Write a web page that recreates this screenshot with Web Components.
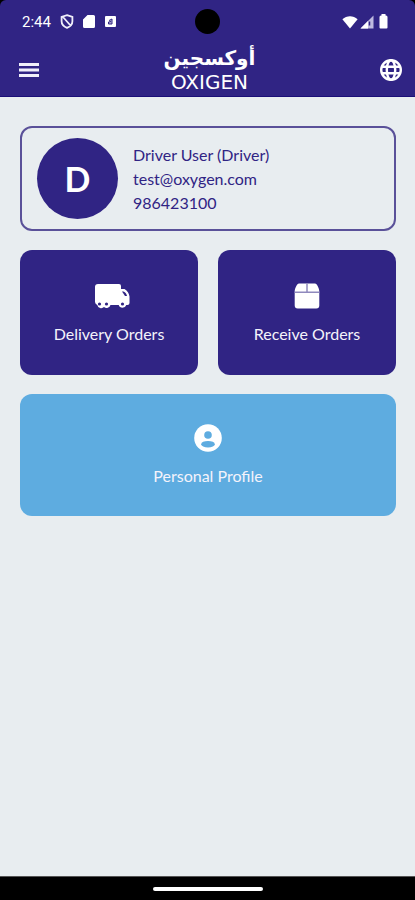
<!DOCTYPE html>
<html lang="en">
<head>
<meta charset="utf-8">
<meta name="viewport" content="width=device-width, initial-scale=1">
<title>Oxigen Driver</title>
<style>
  html { background: #000; }
  body { margin: 0; font-family: Lato, "Liberation Sans", sans-serif; }
</style>
</head>
<body>
<driver-app></driver-app>
<script>
const define = (name, html) => {
  const template = document.createElement('template');
  template.innerHTML = '<style>*{box-sizing:border-box}svg{display:block}</style>' + html;
  customElements.define(name, class extends HTMLElement {
    constructor() {
      super();
      this.attachShadow({ mode: 'open' }).append(template.content.cloneNode(true));
    }
  });
};

define('status-bar', `
  <style>
    :host { display: grid; grid-template-columns: 1fr auto 1fr; align-items: center; height: 43px; padding: 0 22px; color: #fff; }
    .side { display: flex; align-items: center; gap: 8px; }
    .end { justify-content: flex-end; gap: 2px; padding-right: 3px; }
    time { font: 400 15px Roboto, sans-serif; margin-right: 1px; }
    .camera { width: 25px; height: 25px; border-radius: 50%; background: #000; }
  </style>
  <div class="side">
    <time>2:44</time>
    <svg width="14" height="15" viewBox="0 0 14 15" fill="none" stroke="#f0effa" stroke-width="1.8"><path d="M7 1.2 12.4 3v4.2c0 3-2.2 5.3-5.4 6.6C3.800 12.500 1.600 10.200 1.600 7.200V3zM3 3l7.500 8.500"/></svg>
    <svg width="14" height="15" viewBox="0 0 14 15" fill="#fff"><path d="M5.500 1H11.500a1.500 1.500 0 0 1 1.500 1.500v10a1.500 1.500 0 0 1-1.500 1.500h-9A1.500 1.500 0 0 1 1 12.500V5.500z"/></svg>
    <svg width="13" height="13" viewBox="0 0 13 13"><rect x="1" y="1" width="11" height="11" rx="1" fill="#fff"/><path d="M5 5.500 8 4v5H4.500V7L7 6.500" fill="#30248466" stroke="#302484"/></svg>
  </div>
  <div class="camera"></div>
  <div class="side end">
    <svg width="16" height="14" viewBox="0 0 16 14" fill="#fff"><path d="M8 13.500.400 4.200C4.800.200 11.200.200 15.600 4.200z"/></svg>
    <svg width="14" height="14" viewBox="0 0 14 14"><path d="M13.500.500v13H.500z" fill="#bfbbe0"/><path d="M8 6v7.500H.500z" fill="#fff"/><path d="M9.500 6.500v4" stroke="#302484" stroke-width="1.500"/></svg>
    <svg width="14" height="15" viewBox="0 0 14 15" fill="#fff"><path d="M5.500 0h4v1.500H10A1.500 1.500 0 0 1 11.500 3v10.500a1 1 0 0 1-1 1h-6a1 1 0 0 1-1-1V3A1.500 1.500 0 0 1 5 1.500h.500z"/></svg>
  </div>`);

define('brand-logo', `
  <style>
    :host { display: flex; flex-direction: column; align-items: center; color: #fff; }
    .ar { font: 700 20px/24px "DejaVu Sans", sans-serif; }
    .en { font: 400 20px/24px "DejaVu Sans", sans-serif; }
  </style>
  <span class="ar" lang="ar" dir="rtl">أوكسجين</span>
  <span class="en">OXIGEN</span>`);

define('app-bar', `
  <style>
    :host { display: grid; grid-template-columns: 1fr auto 1fr; align-items: center; height: 53px; padding: 0 12px 0 16px; }
    button { border: 0; padding: 0; background: none; color: #fff; }
    .lang { justify-self: end; }
  </style>
  <button class="menu" aria-label="Menu"><svg width="26" height="26" viewBox="0 0 26 26" fill="#f0effa"><path d="M3 6h20v3H3zM3 11.500h20v3H3zM3 17h20v3H3z"/></svg></button>
  <brand-logo></brand-logo>
  <button class="lang" aria-label="Language"><svg width="24" height="24" viewBox="0 0 24 24" fill="none" stroke="#fff" stroke-width="2.400"><circle cx="12" cy="12" r="9.800"/><ellipse cx="12" cy="12" rx="4.200" ry="9.800"/><path d="M3 8.700h18M3 15.300h18"/></svg></button>`);

define('user-card', `
  <style>
    :host { display: flex; align-items: center; gap: 15px; height: 105px; padding: 0 15px; border: 2px solid #5a5199; border-radius: 12px; color: #302484; }
    .avatar { display: grid; place-items: center; width: 81px; height: 81px; flex: none; border-radius: 50%; background: #302484; color: #fff; font: 700 34px Lato, sans-serif; }
    .lines { display: grid; font-size: 16px; line-height: 24px; }
  </style>
  <div class="avatar">D</div>
  <div class="lines"><slot></slot></div>`);

define('nav-tile', `
  <style>
    :host { display: block; }
    button { display: flex; flex-direction: column; align-items: center; justify-content: center; gap: 12px; width: 100%; height: 125px; border: 0; border-radius: 12px; padding: 2px 0 0; background: var(--tile, #302484); color: #f4f3fb; font: 400 16px/24px Lato, sans-serif; }
    :host([wide]) button { height: 122px; }
  </style>
  <button><slot name="icon"></slot><span><slot></slot></span></button>`);

define('driver-app', `
  <style>
    :host { display: flex; flex-direction: column; min-height: 100vh; background: #000; }
    header { background: #302484; border-radius: 6px 6px 0 0; border-bottom: 1px solid #1b0f78; }
    main { flex: 1; display: grid; grid-template-columns: 1fr 1fr; align-content: start; gap: 19px 20px; padding: 29px 19px 20px 20px; background: #e8edf0; }
    user-card, [wide] { grid-column: 1 / -1; }
    [wide] { --tile: #5eace0; }
    footer { display: grid; place-items: center; height: 24px; border-top: 1px solid #555; }
    .handle { width: 110px; height: 4px; border-radius: 2px; background: #fff; }
    a { color: inherit; text-decoration: none; }
  </style>
  <header><status-bar></status-bar><app-bar></app-bar></header>
  <main>
    <user-card><span>Driver User (Driver)</span><a href="mailto:test@oxygen.com">test@oxygen.com</a><span>986423100</span></user-card>
    <nav-tile>
      <svg slot="icon" width="42" height="28" viewBox="-6 0 42 28"><path fill="#fff" d="M4 2h21a2 2 0 0 1 2 2v3h3.500c3 1.500 4.500 4.500 5 7.500v6.500a2 2 0 0 1-2 2h-1.200a4 4 0 0 1-7.600 0h-8.200a4 4 0 0 1-6.500 2 4 4 0 0 1-6.700-2A3.500 3.500 0 0 1 1 20V5a3 3 0 0 1 3-3z"/><path d="M28 9.500h1.500c2 .800 3 2.500 3.500 4.500H31z" fill="#302484"/><g fill="#302484"><circle cx="5.500" cy="22" r="1.600"/><circle cx="12.500" cy="22" r="1.600"/><circle cx="28.500" cy="22" r="1.600"/></g></svg>
      Delivery Orders</nav-tile>
    <nav-tile>
      <svg slot="icon" width="28" height="28" viewBox="0 0 28 28"><path fill="#fff" d="M6 1.500h16c2 0 4.300 5 4.300 8V23.500a3 3 0 0 1-3 3H4.700a3 3 0 0 1-3-3V9.500c0-3 2.300-8 4.300-8z"/><path d="M1.700 10.200h24.600M14 1.500v8" stroke="#8f89bd" stroke-width="1.500"/></svg>
      Receive Orders</nav-tile>
    <nav-tile wide>
      <svg slot="icon" width="28" height="28" viewBox="0 0 28 28"><circle cx="14" cy="14" r="13.800" fill="#fff"/><g fill="#5eace0"><circle cx="14" cy="11" r="3.800"/><ellipse cx="14" cy="20.200" rx="6.800" ry="3.300"/></g></svg>
      Personal Profile</nav-tile>
  </main>
  <footer><div class="handle"></div></footer>`);
</script>
</body>
</html>
